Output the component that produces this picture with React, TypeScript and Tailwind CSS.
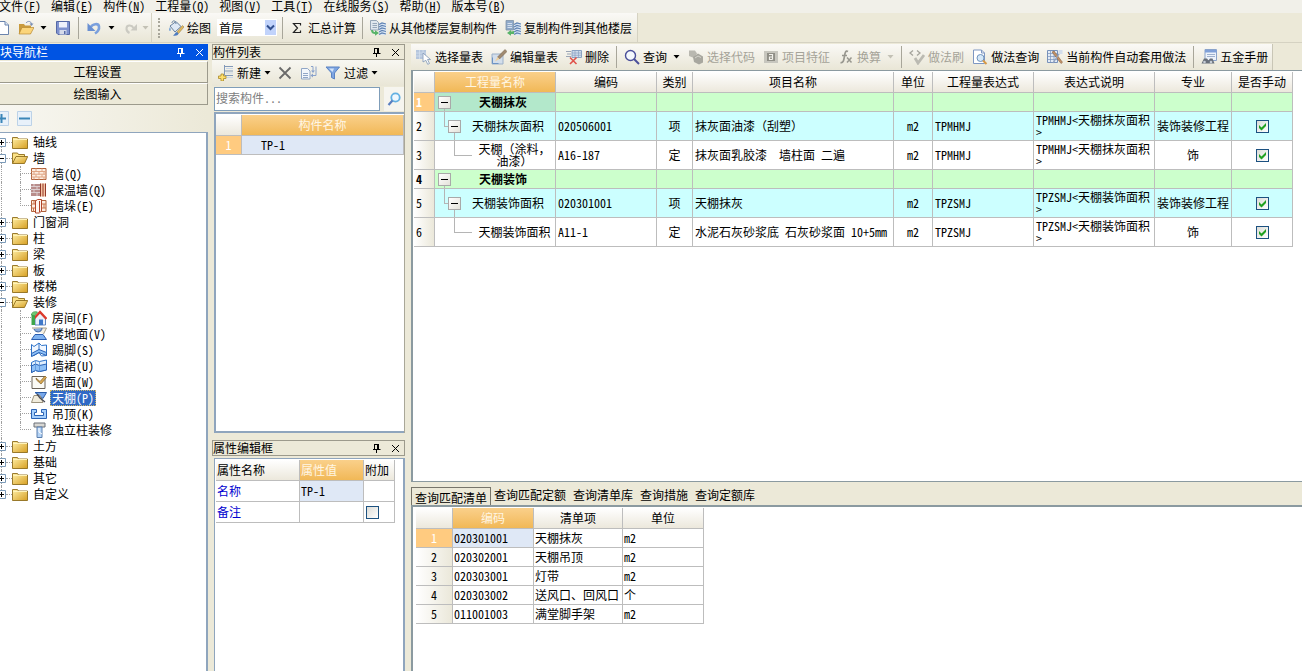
import React from "react";
import { clsx } from "clsx";

interface IconProps {
  children: React.ReactNode;
}

const Icon = ({ children }: IconProps) => (
  <svg viewBox="0 0 16 16" className="w-4 h-4 shrink-0" aria-hidden="true">
    {children}
  </svg>
);

// ---------- toolbar icons ----------

const NewDocIcon = () => (
  <Icon>
    <path d="M3 1.500h8l3.500 3.500v9.500H3z" fill="#fff" stroke="#6b84ad" />
    <path d="M11 1.500V5h3.500" fill="#dce6f5" stroke="#6b84ad" />
  </Icon>
);

const OpenIcon = () => (
  <Icon>
    <path d="M1 14V4h5l1 1.500h6V14z" fill="#c99a3c" />
    <path d="M1 14l3-6.500h12L12.500 14z" fill="#fbd57a" stroke="#b88a34" strokeWidth=".7" />
    <path d="M8 3c2-2.500 5-2 5.500 1" fill="none" stroke="#7b8fb5" />
    <path d="M11.500 3.500h4l-2 2.500z" fill="#7b8fb5" />
  </Icon>
);

const SaveIcon = () => (
  <Icon>
    <path d="M1.500 1.500h13v13H3l-1.500-1.500z" fill="#7f92cf" stroke="#5568a5" />
    <path d="M4 2h8v5.500H4z" fill="#eef1fb" />
    <path d="M4.500 10h7v4.500h-7z" fill="#d5daea" />
    <path d="M9 11h1.500v3H9z" fill="#5568a5" />
  </Icon>
);

const UndoIcon = () => (
  <Icon>
    <path d="M4.500 7.500c2-4 8-4.500 8.500-1 .4 2.500-1 5-4 7" fill="none" stroke="#7ba0dd" strokeWidth="2.600" />
    <path d="M1.500 3v8h8z" fill="#6a90d2" />
  </Icon>
);

const RedoIcon = () => (
  <Icon>
    <path d="M10.500 8C9 5 4 4.500 3.500 8c-.3 2.500 1 4 3 5" fill="none" stroke="#cbcac2" strokeWidth="2" />
    <path d="M14 4v6.500H7.500z" fill="#cbcac2" />
  </Icon>
);

const PaintIcon = () => (
  <Icon>
    <path d="M2 6l6-4.500 5 5-6 5.500z" fill="#dfe9f5" stroke="#66809e" />
    <path d="M4 3c0-3 4-3 4 1" fill="none" stroke="#66809e" />
    <path d="M2 7c-1.500 2-1 4 0 4s1-2 0-4z" fill="#6f9fd8" />
    <path d="M14.500 5.500L9 12l1.500 1.500L16 7z" fill="#e3b95c" stroke="#8d7440" strokeWidth=".5" />
    <path d="M9 12c-2 .5-2 2.500-4 3.500 3 .5 5 0 5.500-2z" fill="#4c7bc0" />
  </Icon>
);

interface CopyIconProps {
  reverse?: boolean;
}

const FloorCopyIcon = ({ reverse }: CopyIconProps) => (
  <Icon>
    <path d={reverse ? "M1 .5h7.500V10H1z" : "M.5.500h6L8.500 2.500V10h-8z"} fill={reverse ? "#8fa9c9" : "#dfe7ee"} stroke="#7f93a8" strokeWidth=".8" />
    <path d="M2.500 3.500h4.500M2.500 5.500h4.500M2.500 7.500h4.500" stroke={reverse ? "#e6eef8" : "#8397ac"} strokeWidth=".8" />
    <path d="M9 4l3-1.500 4 1v11l-3 1-4-1.500z" fill="#dbe7f5" />
    <path d="M9 4.500l3-1.500 4 1M9 7l3-1.500 4 1M9 9.500L12 8l4 1M9 12l3-1.500 4 1M9 14.500L12 13l4 1" fill="none" stroke="#5f83b3" strokeWidth="1.200" />
    {reverse ? (
      <path d="M9 11v3H6v1.800L2 13l4-3v1.500z" fill="#58b368" />
    ) : (
      <path d="M1 10c0 3 2 4 4 4v1.800L9 13l-4-2.800V12c-1 0-2-.5-2-2z" fill="#58b368" />
    )}
  </Icon>
);

const SelectTableIcon = () => (
  <Icon>
    <path d="M0 1h10v9H0z" fill="#b5c6dd" />
    <path d="M0 4h10M0 7h10M3.500 1v9M7 1v9" stroke="#d6e1ef" strokeWidth=".7" />
    <path d="M7 4l7.500 6.500h-3l2 4-1.800.8-1.900-4L7 13z" fill="#fff" stroke="#7d95b5" strokeWidth=".8" />
  </Icon>
);

const EditTableIcon = () => (
  <Icon>
    <path d="M1 5h11v10H1z" fill="#d3deeb" stroke="#9cb0c8" />
    <path d="M14 .5L6.500 8l2 2L16 2.500z" fill="#a08a70" stroke="#6d5a45" strokeWidth=".5" />
    <path d="M6.500 8L4 12.500l4.500-2.500z" fill="#f0d09a" />
    <path d="M1.500 8.500V14.500h6" fill="none" stroke="#6c93c4" />
  </Icon>
);

const DeleteRowIcon = () => (
  <Icon>
    <path d="M0 2.500h5M1 5h4M0 7.500h5" stroke="#9aa5b5" />
    <path d="M6 1.500h9.500v7H6z" fill="#cfdcec" stroke="#8ba2c2" />
    <path d="M6 4h9.500M6 6.300h9.500M9 2v6M12.500 2v6" stroke="#8ba2c2" strokeWidth=".7" />
    <path d="M4 8.500l6.500 6.500M10.500 8.500L4 15" stroke="#e0524a" strokeWidth="1.600" />
  </Icon>
);

const QueryIcon = () => (
  <Icon>
    <circle cx="6.500" cy="6.500" r="5" fill="#f4f8fd" stroke="#4a4f9a" strokeWidth="1.400" />
    <path d="M10 10l5 5" stroke="#4a4f9a" strokeWidth="2" />
  </Icon>
);

const CodeIcon = () => (
  <Icon>
    <path d="M1 1.500h6l2 3-3 4.500-5-2z" fill="#b9b8b0" />
    <path d="M5 8l5-3.500 5 3v6l-4 2-5-2.500z" fill="#a8a79f" />
    <path d="M7 9l3-2 3 1.500" fill="none" stroke="#d5d4cc" />
  </Icon>
);

const FeatureIcon = () => (
  <Icon>
    <path d="M1 2h14v12H1z" fill="#c7c6be" />
    <path d="M4 4h8v8H4z" fill="#8f8e86" />
    <path d="M6 5.500h3.500V10.500M9.500 8H6.500v2.500h3" fill="none" stroke="#f1f0ea" strokeWidth="1.200" />
  </Icon>
);

const FxIcon = () => (
  <Icon>
    <path d="M10 2.500C7.500 1 7 4 6.500 7S5.500 14.500 2.500 13.500M4 6.500h5" fill="none" stroke="#98978f" strokeWidth="1.700" />
    <path d="M9 8.500l4.500 5M13.500 8.500L9 13.500" stroke="#98978f" strokeWidth="1.500" />
  </Icon>
);

const BrushIcon = () => (
  <Icon>
    <path d="M4 1.500L1 4l3 2.500M8 1.500L11 4 8 6.500" fill="none" stroke="#a5a49c" strokeWidth="1.300" />
    <path d="M6 9l3 5L15 6" fill="none" stroke="#bbbab2" strokeWidth="2.800" />
  </Icon>
);

const MethodQueryIcon = () => (
  <Icon>
    <path d="M1.500 1h8l3 3v10.500h-11z" fill="#fff" stroke="#7e97c2" />
    <path d="M9.500 1v3h3" fill="none" stroke="#7e97c2" />
    <circle cx="8.500" cy="9" r="3.500" fill="#d5e8f8" stroke="#6f93bd" />
    <path d="M11 11.500l3.500 3.500" stroke="#d79a45" strokeWidth="2" />
  </Icon>
);

const AutoApplyIcon = () => (
  <Icon>
    <path d="M.5 1.500h10v12H.5z" fill="#e3ebf6" stroke="#7791ba" />
    <path d="M.5 4.500h10M.5 7.500h10M.5 10.500h10M3.500 1.500v12M7 1.500v12" stroke="#7791ba" strokeWidth=".7" />
    <path d="M5 3l9 11.500 1.500-1.200L7 2z" fill="#c49267" stroke="#7b5537" strokeWidth=".5" />
    <path d="M14 2L6 14" stroke="#8e9fbd" strokeWidth="1.300" />
    <path d="M11.500 1h4v4h-4z" fill="#d2ddec" />
  </Icon>
);

const HardwareIcon = () => (
  <Icon>
    <path d="M4 .5h11.500v11H4z" fill="#edf3fb" stroke="#8aa3cb" />
    <path d="M4 1h11.500v2.500H4z" fill="#7fa0d8" />
    <path d="M6 5.500h8M6 7.500h8" stroke="#9fb2cf" />
    <path d="M.5 14.500l2.500-5h3l1.500 2 1.500-2h2.500l2 5z" fill="#69707b" />
    <circle cx="3.500" cy="13" r="1.300" fill="#c5ccd6" />
    <circle cx="10" cy="13" r="1.300" fill="#c5ccd6" />
  </Icon>
);

const AddIcon = () => (
  <Icon>
    <path d="M6.500 0v10M6.500 1.500H15M6.500 6H15M6.500 10.500H15" fill="none" stroke="#8299b8" />
    <path d="M8 3.500h7M8 8h7M8 12.500h7" stroke="#c8d6e8" />
    <path d="M3 9h2.500v2H8v2.500H5.500V16H3v-2.500H.5V11H3z" fill="#ffdf6b" stroke="#a98a2b" strokeWidth=".8" />
  </Icon>
);

const CrossIcon = () => (
  <Icon>
    <path d="M2.500 2.500l11 11M13.500 2.500l-11 11" stroke="#6a6a6a" strokeWidth="1.800" />
  </Icon>
);

const CopyIcon = () => (
  <Icon>
    <path d="M.5 3.500h6l2.500 2.500v8H.5z" fill="#f3f7fc" stroke="#91a6c6" />
    <path d="M2 8.500h5M2 10.500h5M2 12.500h5" stroke="#91a6c6" />
    <path d="M10 1.500h2v5M15 1.500v9h-4" fill="none" stroke="#8aa2cb" />
    <path d="M10 5.500h4L12 8zM12 8.500v4l-2.500-2z" fill="#8aa2cb" />
  </Icon>
);

const FilterIcon = () => (
  <Icon>
    <path d="M1 2h13.500L9.500 8v6l-3-1.500V8z" fill="#7ea5e2" stroke="#5b83c2" />
    <path d="M4 3.500h5L7.500 7z" fill="#d5e4f8" />
  </Icon>
);

const SearchIcon = () => (
  <Icon>
    <circle cx="9.500" cy="6.500" r="4.200" fill="#eef7fe" stroke="#62b0e2" strokeWidth="1.800" />
    <path d="M6.500 9.500L2.500 14" stroke="#5a7fc0" strokeWidth="2.200" />
  </Icon>
);

// ---------- tree icons ----------

const FolderIcon = () => (
  <Icon>
    <path d="M.5 3.500h5l1 1.500h9v9.500H.5z" fill="url(#folder)" stroke="#8f6d1c" strokeWidth=".9" />
    <path d="M1 5.500h14" stroke="#fff3b8" />
  </Icon>
);

const FolderOpenIcon = () => (
  <Icon>
    <path d="M.5 13.500V3h5l1 1.500h6V7" fill="#fbe287" stroke="#8f6d1c" strokeWidth=".9" />
    <path d="M.5 13.500L4 6.500h11.700l-3.200 7z" fill="url(#folder)" stroke="#8f6d1c" strokeWidth=".9" />
  </Icon>
);

const BrickIcon = () => (
  <Icon>
    <path d="M.5 2.500h14.500v11H.5z" fill="#fdeee2" stroke="#b0613a" />
    <path d="M.5 5.500H15M.5 8.200H15M.5 11H15M5 2.500v3M11 2.500v3M3 5.500v3M8 5.500v3M13 5.500v3M5 8.500V11M11 8.500V11M3 11v2.500M8 11v2.500M13 11v2.500" stroke="#e0a584" />
  </Icon>
);

const InsulationIcon = () => (
  <Icon>
    <path d="M0 2h9v12H0z" fill="#b98d8b" />
    <path d="M0 4.500h9M0 7.500h9M0 10.500h9M3 2v3M6 5v3M3 8v3M6 11v3" stroke="#dccccd" />
    <path d="M9 1.500h6V14.500H9z" fill="#f5c5a5" />
    <path d="M9.500 1.500v13M12 1.500v13M14.500 1.500v13" stroke="#93392b" />
  </Icon>
);

const PierIcon = () => (
  <Icon>
    <path d="M.5 2.500H15v11H.5z" fill="#fdeee2" stroke="#b0613a" />
    <path d="M.5 6H5M.5 10H5M11 6h4M11 10h4M3 2.500V6M2.500 10v3.500M13 6v4" stroke="#c9764c" />
    <path d="M4.500 3l2-1.500h4V13l-2 2h-4z" fill="#fff6ef" stroke="#b0452b" />
    <path d="M8.500 3v11" stroke="#b0452b" />
  </Icon>
);

const RoomIcon = () => (
  <Icon>
    <path d="M4 8l5-5 5.500 5v7H4z" fill="#e9f1fb" stroke="#3a6ab5" strokeWidth=".8" />
    <path d="M3 8.500L9 2l6.500 7" fill="none" stroke="#dc3a2c" strokeWidth="2.400" />
    <path d="M8 9.500h4V15H8z" fill="#3f78c9" />
    <path d="M.5 4h3.500v11H.5z" fill="#3ea64b" />
    <path d="M.5 5c0-3 3-4 6-3L3.500 6z" fill="#6fca72" stroke="#2f8a3c" strokeWidth=".6" />
  </Icon>
);

const FloorIcon = () => (
  <Icon>
    <path d="M1 2h14.500l-3 6" fill="#f4efe2" stroke="#a59d88" />
    <path d="M3 3c1 4 8 4 8-1" fill="#86a9dc" stroke="#3a5f9c" />
    <path d="M4 8.500h8l3.500 5H.5z" fill="#7fb2f0" stroke="#2a5db0" />
  </Icon>
);

const SkirtingIcon = () => (
  <Icon>
    <path d="M.5 2.500L3 4.500l5-3.500v9.500L3 13.500.5 14zM8 1l2.500 2.500 5-.5v10.500l-5 .5L8 10.500" fill="#f1f7ff" stroke="#2e73c9" />
    <path d="M.5 11.500l7.500-4 7.500 3v3l-7.500-3-7.500 4z" fill="#8fc1f7" stroke="#2a62b5" />
  </Icon>
);

const DadoIcon = () => (
  <Icon>
    <path d="M.5 4.500l4-2 4 1 7-1.500v10l-7 1.500-4-1-4 2z" fill="#e1effd" stroke="#2e73c9" />
    <path d="M.5 8l4-2 4 1.500 7-1.500v6l-7 1.500-4-1-4 2z" fill="#8fc1f7" stroke="#2a62b5" />
    <path d="M4.500 3v10M8.500 3.500v10" stroke="#5b93d8" strokeWidth=".8" />
  </Icon>
);

const WallFaceIcon = () => (
  <Icon>
    <path d="M1 2.500h13v12H1z" fill="#fbfaf5" stroke="#6a6258" />
    <path d="M5 4l4 3.500L14 2l1.500 1.500L10 10 5.500 6z" fill="#d9a850" stroke="#81602a" strokeWidth=".7" />
  </Icon>
);

const CeilingIcon = () => (
  <Icon>
    <path d="M4 2.500h11.500l-3.500 6z" fill="#79a8ea" stroke="#2c5da9" />
    <path d="M3 5.500h6L12 12.500H.5z" fill="#f1ecdc" stroke="#9c937d" />
    <path d="M6 4l3 4 5 4" fill="none" stroke="#4a4a52" strokeWidth="1.300" />
  </Icon>
);

const SuspendedIcon = () => (
  <Icon>
    <path d="M.5 3.500h5v3h-2v3h9v-3h-2v-3h5v9H.5z" fill="#a6cffb" stroke="#2a62b5" />
  </Icon>
);

const ColumnIcon = () => (
  <Icon>
    <path d="M3 1h11v4H3z" fill="#d8d7d3" stroke="#6b7178" />
    <path d="M6 5h5v10.500H6z" fill="#b4d3f5" stroke="#5b7fae" />
    <path d="M8 6v4l3 2" fill="none" stroke="#fff" />
  </Icon>
);

// ---------- shared controls ----------

const DropArrow = ({ muted }: { muted?: boolean }) => (
  <svg viewBox="0 0 7 4" className="w-[7px] h-1 shrink-0" aria-hidden="true">
    <path d="M.5 0h6l-3 3.500z" fill={muted ? "#c3c1b5" : "#000"} />
  </svg>
);

const Separator = () => <div className="w-px h-[22px] mx-[3px] bg-[#a8a69a] shrink-0"></div>;

interface ToolButtonProps {
  icon: React.ReactNode;
  label?: string;
  arrow?: boolean;
  tight?: boolean;
  disabled?: boolean;
}

const ToolButton = ({ icon, label, arrow, tight, disabled }: ToolButtonProps) => (
  <button
    disabled={disabled}
    className={clsx(
      "flex items-center h-6 pl-1 gap-[3px] shrink-0",
      tight ? "pr-0.5" : "pr-1",
      disabled && "text-[#a5a398]"
    )}
  >
    {icon}
    {label && <span>{label}</span>}
    {arrow && (
      <span className={clsx(!tight && "pl-[3px]")}>
        <DropArrow muted={disabled} />
      </span>
    )}
  </button>
);

interface CheckboxProps {
  label: string;
  defaultChecked?: boolean;
}

const Checkbox = ({ label, defaultChecked }: CheckboxProps) => (
  <label className="inline-grid w-[13px] h-[13px] align-middle">
    <input
      type="checkbox"
      aria-label={label}
      defaultChecked={defaultChecked}
      className="peer col-start-1 row-start-1 appearance-none w-[13px] h-[13px] border border-[#1c5180] bg-linear-to-br from-[#dcdcd7] to-white"
    />
    <svg
      viewBox="0 0 13 13"
      className="hidden peer-checked:block col-start-1 row-start-1 w-[13px] h-[13px] pointer-events-none"
      aria-hidden="true"
    >
      <path d="M3 5v3l2.500 2.500L10 6V3L5.500 7.500z" fill="#21a121" />
    </svg>
  </label>
);

const PanelTitle = ({ title, active }: { title: string; active?: boolean }) => (
  <div
    className={clsx(
      "flex items-center h-4 pr-1 shrink-0",
      active ? "bg-[#0054e3] text-white" : "border border-[#9c9a8c] bg-[#ece9d8]"
    )}
  >
    <span className="flex-1">{title}</span>
    <button aria-label={`固定${title}`} className="mr-2.5">
      <svg viewBox="0 0 9 9" className="w-[9px] h-[9px]" aria-hidden="true">
        <path d="M2 .5h5M2.500 0v5M5.500 0v5M6.500 0v5M1 5.500h7.500M4.500 5.500V9" fill="none" stroke="currentColor" />
      </svg>
    </button>
    <button aria-label={`关闭${title}`}>
      <svg viewBox="0 0 9 9" className="w-[9px] h-[9px]" aria-hidden="true">
        <path d="M1 1l7 7M8 1L1 8" stroke="currentColor" />
      </svg>
    </button>
  </div>
);

// ---------- header ----------

const menus = [
  ["文件", "F"],
  ["编辑", "E"],
  ["构件", "N"],
  ["工程量", "Q"],
  ["视图", "V"],
  ["工具", "T"],
  ["在线服务", "S"],
  ["帮助", "H"],
  ["版本号", "B"],
];

const MenuBar = () => (
  <nav className="flex gap-2.5 h-[13px] -ml-px items-start leading-3 bg-[#f1f0e9] shrink-0">
    {menus.map(([name, key]) => (
      <button key={name} className="shrink-0">
        {name}(<u>{key}</u>)
      </button>
    ))}
  </nav>
);

const MainToolbar = () => (
  <div className="flex h-[30px] shrink-0 bg-[#ece9d8] border-b border-[#d5d2c2]">
    <div className="flex items-center -ml-2.5 bg-linear-to-b from-[#faf9f6] to-[#e9e6d6]">
      <ToolButton icon={<NewDocIcon />} />
      <ToolButton icon={<OpenIcon />} arrow />
      <ToolButton icon={<SaveIcon />} />
      <Separator />
      <ToolButton icon={<UndoIcon />} arrow />
      <ToolButton icon={<RedoIcon />} arrow tight disabled />
    </div>
    <div className="flex items-center pl-1.5 pr-px bg-linear-to-b from-[#faf9f6] to-[#e9e6d6] border-x border-[#d5d2c2]">
      <div className="h-5 mr-1 border-l-2 border-dotted border-[#a8a69a]"></div>
      <ToolButton icon={<PaintIcon />} label="绘图" />
      <label className="grid items-center mx-0.5">
        <select
          aria-label="楼层"
          className="col-start-1 row-start-1 appearance-none w-[60px] h-[17px] pl-0.5 bg-white leading-4"
        >
          <option>首层</option>
        </select>
        <svg
          viewBox="0 0 11 15"
          className="col-start-1 row-start-1 justify-self-end w-[11px] h-[15px] mr-px pointer-events-none"
          aria-hidden="true"
        >
          <path d="M0 0h11v15H0z" fill="#c1d3fb" />
          <path d="M2 5.500L5.500 9 9 5.500" fill="none" stroke="#32508e" strokeWidth="2" />
        </svg>
      </label>
      <Separator />
      <button className="flex items-center gap-1.5 pl-1.5 pr-[3px] h-6">
        <svg viewBox="0 0 10 12" className="w-2.5 h-3" aria-hidden="true">
          <path d="M8.500 3.500V1.500h-7L5.500 6l-4 4.500h7V8.500" fill="none" stroke="#222" strokeWidth="1.200" />
        </svg>
        汇总计算
      </button>
      <Separator />
      <ToolButton icon={<FloorCopyIcon />} label="从其他楼层复制构件" />
      <ToolButton icon={<FloorCopyIcon reverse />} label="复制构件到其他楼层" />
    </div>
  </div>
);

// ---------- navigation tree ----------

interface TreeItem {
  name: string;
  children?: { name: string; icon: React.ReactNode; selected?: boolean }[];
}

const treeItems: TreeItem[] = [
  { name: "轴线" },
  {
    name: "墙",
    children: [
      { name: "墙(Q)", icon: <BrickIcon /> },
      { name: "保温墙(Q)", icon: <InsulationIcon /> },
      { name: "墙垛(E)", icon: <PierIcon /> },
    ],
  },
  { name: "门窗洞" },
  { name: "柱" },
  { name: "梁" },
  { name: "板" },
  { name: "楼梯" },
  {
    name: "装修",
    children: [
      { name: "房间(F)", icon: <RoomIcon /> },
      { name: "楼地面(V)", icon: <FloorIcon /> },
      { name: "踢脚(S)", icon: <SkirtingIcon /> },
      { name: "墙裙(U)", icon: <DadoIcon /> },
      { name: "墙面(W)", icon: <WallFaceIcon /> },
      { name: "天棚(P)", icon: <CeilingIcon />, selected: true },
      { name: "吊顶(K)", icon: <SuspendedIcon /> },
      { name: "独立柱装修", icon: <ColumnIcon /> },
    ],
  },
  { name: "土方" },
  { name: "基础" },
  { name: "其它" },
  { name: "自定义" },
];

const Tree = () => (
  <ul>
    {treeItems.map((item, i) => (
      <li key={item.name}>
        <div className="flex items-center h-4 -ml-[3px]">
          {/* Expander with the root line running through it */}
          <div className="flex flex-col items-center h-4">
            <div className={clsx("flex-1 border-l", i > 0 ? "border-dotted border-[#a0a0a0]" : "border-transparent")}></div>
            <svg viewBox="0 0 9 9" className="w-[9px] h-[9px]" aria-hidden="true">
              <path d="M.5.500h8v8h-8z" fill="#fff" stroke="#7b9ab8" />
              <path d={item.children ? "M2 4.500h5" : "M2 4.500h5M4.500 2v5"} stroke="#000" />
            </svg>
            <div
              className={clsx(
                "flex-1 border-l",
                i < treeItems.length - 1 ? "border-dotted border-[#a0a0a0]" : "border-transparent"
              )}
            ></div>
          </div>
          <div className="w-1.5 border-t border-dotted border-[#a0a0a0]"></div>
          {item.children ? <FolderOpenIcon /> : <FolderIcon />}
          <span className="ml-[5px]">{item.name}</span>
        </div>
        {item.children && (
          <ul>
            {item.children.map((child, j) => (
              <li key={child.name} className="flex items-center h-4">
                <div className="w-[19px] h-4 ml-px border-l border-dotted border-[#a0a0a0]"></div>
                <div className="flex flex-col w-[11px] h-4">
                  <div className="h-2 border-l border-b border-dotted border-[#a0a0a0]"></div>
                  {j < item.children!.length - 1 && (
                    <div className="h-2 border-l border-dotted border-[#a0a0a0]"></div>
                  )}
                </div>
                {child.icon}
                <span
                  className={clsx(
                    "ml-[3px] px-px border border-dotted h-4 leading-[14px]",
                    child.selected ? "bg-[#316ac5] text-white border-[#ceb56a]" : "border-transparent"
                  )}
                >
                  {child.name}
                </span>
              </li>
            ))}
          </ul>
        )}
      </li>
    ))}
  </ul>
);

const navButtonClass =
  "h-[22px] pr-3 border-b border-r border-[#9c9a8c] border-t border-t-white bg-[#ece9d8] shrink-0";

const NavPanel = () => (
  <aside className="flex flex-col w-52 shrink-0">
    <PanelTitle title="块导航栏" active />
    <div className="flex flex-col pt-px shrink-0">
      <button className={navButtonClass}>工程设置</button>
      <button className={navButtonClass}>绘图输入</button>
    </div>
    <div className="flex items-center gap-2 h-[27px] -ml-1.5 bg-linear-to-r from-[#f8f7f2] to-[#ece9d8] shrink-0">
      <button aria-label="全部展开">
        <svg viewBox="0 0 15 15" className="w-[15px] h-[15px]" aria-hidden="true">
          <path d="M.5.500h14v14H.5z" fill="#e8f1fa" stroke="#bcd2e8" />
          <path d="M3 7.500h9M7.500 3v9" stroke="#3b86b8" strokeWidth="2" />
        </svg>
      </button>
      <button aria-label="全部折叠">
        <svg viewBox="0 0 15 15" className="w-[15px] h-[15px]" aria-hidden="true">
          <path d="M.5.500h14v14H.5z" fill="#e8f1fa" stroke="#bcd2e8" />
          <path d="M2 7.500h11" stroke="#3b86b8" strokeWidth="2" />
        </svg>
      </button>
    </div>
    <div className="flex-1 pt-px bg-white border-t border-r-2 border-[#8fa5bd] overflow-hidden">
      <Tree />
    </div>
  </aside>
);

// ---------- grid styles ----------

const cell = "border-r border-b border-[#bdbdbd]";
const head = `${cell} h-[21px] font-normal bg-linear-to-b from-white to-[#ece8dc]`;
const activeHead = `${cell} h-[21px] font-normal text-[#fff6e4] bg-linear-to-b from-[#fad08a] to-[#f1b856]`;
const rowHead = `${cell} font-normal bg-linear-to-r from-white to-[#ebe8da]`;
const activeRowHead = `${cell} font-normal text-white bg-[#ffcb80]`;

// ---------- component list and properties ----------

const ComponentPanel = () => (
  <section className="flex flex-col flex-1 min-h-0">
    <PanelTitle title="构件列表" />
    <div className="flex flex-col flex-1 border-r border-[#a9a798]">
      <div className="flex items-center h-[26px] pl-0.5 bg-linear-to-b from-[#f8f7f2] to-[#e9e6d6] shrink-0">
        <ToolButton icon={<AddIcon />} label="新建" arrow tight />
        <ToolButton icon={<CrossIcon />} />
        <ToolButton icon={<CopyIcon />} />
        <ToolButton icon={<FilterIcon />} label="过滤" arrow tight />
      </div>
      <div className="flex items-center pl-0.5 gap-1 h-[26px] shrink-0">
        <input
          type="text"
          aria-label="搜索构件"
          placeholder="搜索构件..."
          className="flex-1 min-w-0 h-6 px-px pb-1 bg-white border border-[#7f9db9] placeholder:text-[#808080]"
        />
        <button aria-label="搜索" className="flex items-center justify-center w-5 h-6 bg-[#f6f5ef]">
          <SearchIcon />
        </button>
      </div>
      <div className="flex-1 ml-0.5 pt-px bg-white border-2 border-[#8fa5bd] border-r-0">
        <table className="w-full table-fixed border-separate border-spacing-0">
          <colgroup>
            <col className="w-[26px]" />
            <col />
          </colgroup>
          <thead>
            <tr>
              <th className={head}></th>
              <th className={activeHead}>构件名称</th>
            </tr>
          </thead>
          <tbody>
            <tr>
              <th className={`${activeRowHead} h-[19px]`}>1</th>
              <td className={`${cell} pl-[19px] bg-[#dfe8f6]`}>TP-1</td>
            </tr>
          </tbody>
        </table>
      </div>
    </div>
  </section>
);

const PropertyPanel = () => (
  <section className="flex flex-col h-[231px] shrink-0">
    <PanelTitle title="属性编辑框" />
    <div className="flex-1 mt-0.5 ml-0.5 p-px bg-white border-t border-l border-r-2 border-[#8fa5bd]">
      <table className="w-[179px] table-fixed border-separate border-spacing-0">
        <colgroup>
          <col className="w-[84px]" />
          <col className="w-16" />
          <col className="w-[31px]" />
        </colgroup>
        <thead>
          <tr className="text-left">
            <th className={`${head} pl-px`}>属性名称</th>
            <th className={`${activeHead} pl-px`}>属性值</th>
            <th className={`${head} pl-px`}>附加</th>
          </tr>
        </thead>
        <tbody>
          <tr>
            <td className={`${cell} h-[21px] pl-px text-[#0000d0]`}>名称</td>
            <td className={`${cell} pl-px bg-[#dfe8f6]`}>TP-1</td>
            <td className={cell}></td>
          </tr>
          <tr>
            <td className={`${cell} h-[21px] pl-px text-[#0000d0]`}>备注</td>
            <td className={cell}></td>
            <td className={`${cell} pl-0.5 leading-none`}>
              <Checkbox label="附加备注" />
            </td>
          </tr>
        </tbody>
      </table>
    </div>
  </section>
);

// ---------- quantity table ----------

interface QuantityRow {
  level: number;
  name: string;
  code?: string;
  kind?: string;
  item?: string;
  unit?: string;
  expr?: string;
  desc?: string;
  major?: string;
}

const quantityRows: QuantityRow[] = [
  { level: 0, name: "天棚抹灰" },
  {
    level: 1,
    name: "天棚抹灰面积",
    code: "020506001",
    kind: "项",
    item: "抹灰面油漆（刮塑）",
    unit: "m2",
    expr: "TPMHMJ",
    desc: "TPMHMJ<天棚抹灰面积>",
    major: "装饰装修工程",
  },
  {
    level: 2,
    name: "天棚（涂料，油漆）",
    code: "A16-187",
    kind: "定",
    item: "抹灰面乳胶漆  墙柱面 二遍",
    unit: "m2",
    expr: "TPMHMJ",
    desc: "TPMHMJ<天棚抹灰面积>",
    major: "饰",
  },
  { level: 0, name: "天棚装饰" },
  {
    level: 1,
    name: "天棚装饰面积",
    code: "020301001",
    kind: "项",
    item: "天棚抹灰",
    unit: "m2",
    expr: "TPZSMJ",
    desc: "TPZSMJ<天棚装饰面积>",
    major: "装饰装修工程",
  },
  {
    level: 2,
    name: "天棚装饰面积",
    code: "A11-1",
    kind: "定",
    item: "水泥石灰砂浆底 石灰砂浆面 10+5mm",
    unit: "m2",
    expr: "TPZSMJ",
    desc: "TPZSMJ<天棚装饰面积>",
    major: "饰",
  },
];

const quantityHeads = ["编码", "类别", "项目名称", "单位", "工程量表达式", "表达式说明", "专业", "是否手动"];

const Collapser = () => (
  <div className="flex flex-col items-center self-stretch w-[13px]">
    <div className="flex-1"></div>
    <button aria-label="折叠" className="flex items-center justify-center w-[13px] h-[13px] border border-[#a9a9a9] bg-linear-to-br from-white to-[#e4e2da]">
      <span className="w-[7px] h-px bg-black"></span>
    </button>
    <div className="flex-1 border-l border-[#b5b5b5]"></div>
  </div>
);

const NameCell = ({ row }: { row: QuantityRow }) => (
  <div className={clsx("flex items-center", row.level === 0 ? "h-[18px] pl-[3px]" : "h-7")}>
    {row.level === 1 && (
      <div className="self-start w-1 h-[15px] ml-[9px] border-l border-b border-[#b5b5b5]"></div>
    )}
    {row.level === 2 && (
      <div className="self-start w-[18px] h-[15px] ml-[19px] border-l border-b border-[#b5b5b5]"></div>
    )}
    {row.level < 2 && <Collapser />}
    <span className={clsx("flex-1 text-center", row.level === 0 && "font-bold", row.level === 2 && "ml-0.5")}>
      {row.name}
    </span>
  </div>
);

const QuantityTable = () => (
  <table className="w-[879px] table-fixed border-separate border-spacing-0 leading-3">
    <colgroup>
      <col className="w-[21px]" />
      <col className="w-[121px]" />
      <col className="w-[101px]" />
      <col className="w-9" />
      <col className="w-[201px]" />
      <col className="w-[39px]" />
      <col className="w-[101px]" />
      <col className="w-[121px]" />
      <col className="w-[77px]" />
      <col className="w-[61px]" />
    </colgroup>
    <thead>
      <tr>
        <th className={head}></th>
        <th className={activeHead}>工程量名称</th>
        {quantityHeads.map((name) => (
          <th key={name} className={head}>{name}</th>
        ))}
      </tr>
    </thead>
    <tbody>
      {quantityRows.map((row, i) => (
        <tr
          key={i}
          className={clsx(
            row.level === 0 && "h-[19px] bg-[#ccffcc]",
            row.level === 1 && "h-[29px] bg-[#ccffff]",
            row.level === 2 && "h-[29px]"
          )}
        >
          <th className={clsx(i === 0 ? activeRowHead : rowHead, "pl-0.5 text-left")}>
            <span className={clsx(row.level === 0 && "font-bold")}>{i + 1}</span>
          </th>
          <td className={clsx(cell, i === 0 && "bg-[#b3e8cb]")}>
            <NameCell row={row} />
          </td>
          <td className={`${cell} pl-0.5`}>{row.code}</td>
          <td className={`${cell} text-center`}>{row.kind}</td>
          <td className={`${cell} pl-0.5 whitespace-pre`}>{row.item}</td>
          <td className={`${cell} text-center`}>{row.unit}</td>
          <td className={`${cell} pl-0.5`}>{row.expr}</td>
          <td className={`${cell} pl-0.5 break-all`}>{row.desc}</td>
          <td className={`${cell} text-center whitespace-nowrap`}>{row.major}</td>
          <td className={`${cell} text-center`}>
            {row.level > 0 && <Checkbox label={`第${i + 1}行是否手动`} defaultChecked />}
          </td>
        </tr>
      ))}
    </tbody>
  </table>
);

const QuantityToolbar = () => (
  <div className="flex h-[26px] bg-[#ece9d8] shrink-0">
    <div className="flex items-center pl-px border-r border-[#c9c6b6] bg-linear-to-b from-[#faf9f6] to-[#e9e6d6]">
      <ToolButton icon={<SelectTableIcon />} label="选择量表" />
      <ToolButton icon={<EditTableIcon />} label="编辑量表" />
      <ToolButton icon={<DeleteRowIcon />} label="删除" />
      <Separator />
      <ToolButton icon={<QueryIcon />} label="查询" arrow />
      <ToolButton icon={<CodeIcon />} label="选择代码" disabled />
      <ToolButton icon={<FeatureIcon />} label="项目特征" disabled />
      <ToolButton icon={<FxIcon />} label="换算" arrow disabled />
      <Separator />
      <ToolButton icon={<BrushIcon />} label="做法刷" disabled />
      <ToolButton icon={<MethodQueryIcon />} label="做法查询" />
      <ToolButton icon={<AutoApplyIcon />} label="当前构件自动套用做法" />
      <Separator />
      <ToolButton icon={<HardwareIcon />} label="五金手册" />
    </div>
  </div>
);

// ---------- query tabs ----------

const tabs = ["查询匹配清单", "查询匹配定额", "查询清单库", "查询措施", "查询定额库"];

const listRows = [
  ["020301001", "天棚抹灰", "m2"],
  ["020302001", "天棚吊顶", "m2"],
  ["020303001", "灯带", "m2"],
  ["020303002", "送风口、回风口", "个"],
  ["011001003", "满堂脚手架", "m2"],
];

const QueryPanel = () => (
  <section className="flex flex-col h-[184px] shrink-0">
    <div role="tablist" className="flex h-[18px] shrink-0">
      {tabs.map((tab, i) => (
        <button
          key={tab}
          role="tab"
          aria-selected={i === 0}
          className={clsx(
            "px-[3px]",
            i === 0 ? "pt-0.5 border border-b-0 border-[#77756a]" : "pb-0.5 mr-px"
          )}
        >
          {tab}
        </button>
      ))}
    </div>
    <div className="flex-1 pl-[3px] pt-px bg-white border-t-2 border-l-2 border-[#8b9aa0]">
      <table className="w-72 table-fixed border-separate border-spacing-0">
        <colgroup>
          <col className="w-[37px]" />
          <col className="w-[81px]" />
          <col className="w-[89px]" />
          <col className="w-[81px]" />
        </colgroup>
        <thead>
          <tr>
            <th className={head}></th>
            <th className={activeHead}>编码</th>
            <th className={head}>清单项</th>
            <th className={head}>单位</th>
          </tr>
        </thead>
        <tbody>
          {listRows.map(([code, name, unit], i) => (
            <tr key={code}>
              <th className={clsx(i === 0 ? activeRowHead : rowHead, "h-[19px]")}>{i + 1}</th>
              <td className={clsx(cell, "pl-px", i === 0 && "bg-[#dfe8f6]")}>{code}</td>
              <td className={`${cell} pl-px whitespace-nowrap`}>{name}</td>
              <td className={`${cell} pl-px`}>{unit}</td>
            </tr>
          ))}
        </tbody>
      </table>
    </div>
  </section>
);

const App = () => {
  return (
    <div className="flex flex-col h-screen overflow-hidden bg-[#ece9d8] text-black text-[12px] leading-[14px] font-['Noto_Sans_Mono_CJK_SC','Noto_Sans_CJK_SC',monospace]">
      {/* Shared gradient, referenced by the folder icons */}
      <svg className="w-0 h-0 shrink-0" aria-hidden="true">
        <defs>
          <linearGradient id="folder" x1="0" y1="0" x2="1" y2="1">
            <stop offset="0" stopColor="#fff0a8" />
            <stop offset="1" stopColor="#d79f22" />
          </linearGradient>
        </defs>
      </svg>
      <MenuBar />
      <MainToolbar />
      <div className="flex flex-1 min-h-0 pt-px">
        <NavPanel />
        <div className="flex flex-col w-[193px] ml-1 gap-[7px] shrink-0">
          <ComponentPanel />
          <PropertyPanel />
        </div>
        <main className="flex flex-col flex-1 min-w-0 ml-1.5">
          <QuantityToolbar />
          <section className="flex-1 min-h-0 pt-px pl-px bg-white border-l-2 border-y border-[#8b9aa0] overflow-hidden">
            <QuantityTable />
          </section>
          <div className="h-[5px] shrink-0"></div>
          <QueryPanel />
        </main>
      </div>
    </div>
  );
};

export default App;
